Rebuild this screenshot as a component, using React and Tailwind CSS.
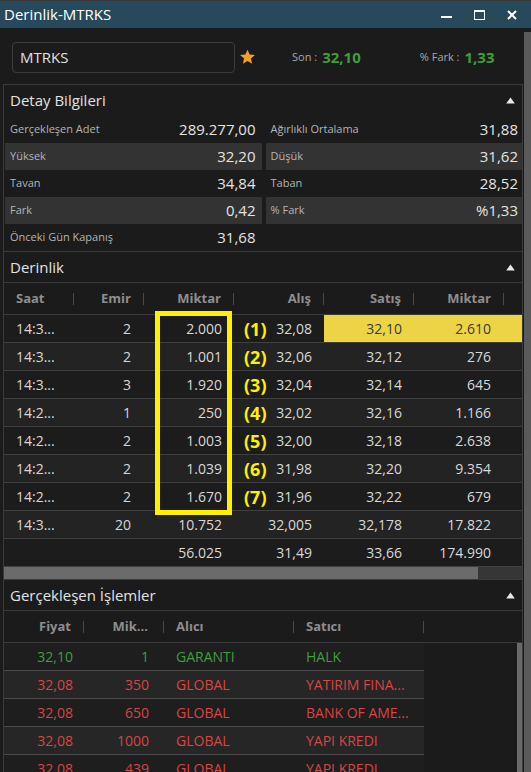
import React from "react";

const detay = [
  ["Gerçekleşen Adet", "289.277,00", "Ağırlıklı Ortalama", "31,88", false],
  ["Yüksek", "32,20", "Düşük", "31,62", true],
  ["Tavan", "34,84", "Taban", "28,52", false],
  ["Fark", "0,42", "% Fark", "%1,33", true],
  ["Önceki Gün Kapanış", "31,68", null, null, false],
];

const derinlik = [
  ["14:3...", "2", "2.000", "(1)", "32,08", "32,10", "2.610", true],
  ["14:3...", "2", "1.001", "(2)", "32,06", "32,12", "276"],
  ["14:3...", "3", "1.920", "(3)", "32,04", "32,14", "645"],
  ["14:2...", "1", "250", "(4)", "32,02", "32,16", "1.166"],
  ["14:2...", "2", "1.003", "(5)", "32,00", "32,18", "2.638"],
  ["14:2...", "2", "1.039", "(6)", "31,98", "32,20", "9.354"],
  ["14:2...", "2", "1.670", "(7)", "31,96", "32,22", "679"],
  ["14:3...", "20", "10.752", "", "32,005", "32,178", "17.822"],
  ["", "", "56.025", "", "31,49", "33,66", "174.990"],
];

const islemler = [
  ["32,10", "1", "GARANTI", "HALK", "g"],
  ["32,08", "350", "GLOBAL", "YATIRIM FINA...", "r"],
  ["32,08", "650", "GLOBAL", "BANK OF AME...", "r"],
  ["32,08", "1000", "GLOBAL", "YAPI KREDI", "r"],
  ["32,08", "439", "GLOBAL", "YAPI KREDI", "r"],
];

function Tri() {
  return (
    <svg width="9" height="7" viewBox="0 0 9 7" className="block">
      <path d="M4.5 0.5 L8.8 6.5 L0.2 6.5 Z" fill="#e8e8e8" />
    </svg>
  );
}

function SectionHeader({ title }) {
  return (
    <div className="h-[31px] flex items-center justify-between pl-[6px] pr-[7px] border-b border-[#3a3a3a]">
      <span className="text-[15px] text-[#e2e2e2]">{title}</span>
      <Tri />
    </div>
  );
}

function Sep() {
  return <span className="w-px h-[12px] bg-[#4a4a4a] shrink-0" />;
}

function HCell({ w, children, left }) {
  return (
    <div className={`${w} flex items-center shrink-0`}>
      <span className={`flex-1 ${left ? "text-left pl-3" : "text-right pr-3"}`}>{children}</span>
      <Sep />
    </div>
  );
}

export default function App() {
  return (
    <div className="w-[531px] h-[772px] overflow-hidden bg-[#1b1b1b] flex flex-col font-['Open_Sans',sans-serif] text-[#d8d8d8]">
      {/* Title bar */}
      <div className="h-[28px] shrink-0 bg-[#264a5b] border-t border-[#3a3a3a] flex items-center justify-between pl-[4px] pr-[14px]">
        <span className="text-[15px] text-white leading-none">Derinlik-MTRKS</span>
        <div className="flex items-center gap-[22px]">
          <span className="w-[11px] h-[2px] bg-white mt-[5px]" />
          <span className="w-[11px] h-[10px] border border-white border-t-[2px]" />
          <svg width="10" height="10" viewBox="0 0 10 10">
            <path d="M1 1 L9 9 M9 1 L1 9" stroke="white" strokeWidth="2" />
          </svg>
        </div>
      </div>

      <div className="flex-1 flex min-h-0">
        <div className="flex-1 flex flex-col min-w-0">
          {/* Search row */}
          <div className="h-[56px] shrink-0 flex items-center pl-[12px] pt-[2px]">
            <div className="w-[223px] h-[31px] border border-[#3c3c3c] rounded-[4px] flex items-center pl-[7px] text-[15px] text-[#e0e0e0]">
              MTRKS
            </div>
            <svg width="17" height="16" viewBox="0 0 24 23" className="ml-[4px]">
              <path d="M12 1 L15.1 8 L22.7 8.6 L16.9 13.6 L18.7 21.1 L12 17.1 L5.3 21.1 L7.1 13.6 L1.3 8.6 L8.9 8 Z" fill="#f0a024" />
            </svg>
            <span className="ml-[36px] text-[11px] text-[#a8a8a8]">Son :</span>
            <span className="ml-[5px] text-[15px] font-bold text-[#3e9e3e]">32,10</span>
            <span className="ml-[59px] text-[11px] text-[#a8a8a8]">% Fark :</span>
            <span className="ml-[5px] text-[15px] font-bold text-[#3e9e3e]">1,33</span>
          </div>

          <div className="flex-1 ml-[3px] w-[520px] border-x border-t border-[#3a3a3a] flex flex-col min-h-0">
            {/* Detay */}
            <div className="h-[31px] flex items-center justify-between pl-[6px] pr-[7px]">
              <span className="text-[15px] text-[#e2e2e2]">Detay Bilgileri</span>
              <Tri />
            </div>
            <div className="pl-px grid grid-cols-2 gap-x-[4px] border-b border-[#3a3a3a]">
              {detay.map((r, i) => (
                <React.Fragment key={i}>
                  <div className={`h-[27px] flex items-center justify-between pl-[5px] pr-[6px] ${r[4] ? "bg-[#333333]" : ""}`}>
                    <span className="text-[11px] text-[#b4b4b4]">{r[0]}</span>
                    <span className="text-[15px] text-[#e4e4e4]">{r[1]}</span>
                  </div>
                  <div className={`h-[27px] flex items-center justify-between pl-[5px] pr-[4px] ${r[4] ? "bg-[#333333]" : ""}`}>
                    {r[2] && <span className="text-[11px] text-[#b4b4b4]">{r[2]}</span>}
                    {r[3] && <span className="text-[15px] text-[#e4e4e4]">{r[3]}</span>}
                  </div>
                </React.Fragment>
              ))}
            </div>

            {/* Derinlik */}
            <SectionHeader title="Derinlik" />
            <div className="relative">
              <div className="h-[32px] flex items-center border-b border-[#3a3a3a] text-[13px] font-bold text-[#8e8e8e]">
                <HCell w="w-[70px]" left>Saat</HCell>
                <HCell w="w-[70px]">Emir</HCell>
                <HCell w="w-[90px]">Miktar</HCell>
                <HCell w="w-[90px]">Alış</HCell>
                <HCell w="w-[90px]">Satış</HCell>
                <HCell w="w-[90px]">Miktar</HCell>
              </div>
              {derinlik.map((r, i) => (
                <div
                  key={i}
                  className={`h-[28px] flex border-b border-[#404040] text-[14px] ${i % 2 === 0 ? "bg-[#1c1c1c]" : "bg-[#232323]"}`}
                >
                  <div className="w-[70px] flex items-center pl-3">{r[0]}</div>
                  <div className="w-[70px] flex items-center justify-end pr-[13px]">{r[1]}</div>
                  <div className="w-[90px] flex items-center justify-end pr-3">{r[2]}</div>
                  <div className="w-[90px] flex items-center justify-between pl-[10px] pr-3">
                    <span className="text-[18px] font-bold text-[#fff000] leading-none">{r[3]}</span>
                    <span>{r[4]}</span>
                  </div>
                  <div className={`flex-1 flex ${r[7] ? "bg-[#ecd444] text-[#3a3a3a]" : ""}`}>
                    <div className="w-[90px] flex items-center justify-end pr-3">{r[5]}</div>
                    <div className="w-[90px] flex items-center justify-end pr-[13px]">{r[6]}</div>
                  </div>
                </div>
              ))}
              <div className="absolute left-[151px] top-[28px] w-[77px] h-[204px] border-[5px] border-[#fff000]" />
            </div>
            <div className="h-[12px] flex shrink-0">
              <div className="w-[474px] bg-[#6b6b6b]" />
              <div className="flex-1 bg-[#363636]" />
            </div>

            {/* Gerçekleşen İşlemler */}
            <div className="border-t border-[#3a3a3a]">
              <SectionHeader title="Gerçekleşen İşlemler" />
            </div>
            <div className="h-[32px] flex items-center border-b border-[#3a3a3a] text-[13px] font-bold text-[#8e8e8e]">
              <HCell w="w-[80px]">Fiyat</HCell>
              <div className="w-[80px] flex items-center shrink-0">
                <span className="flex-1 text-right pr-[15px]">Mik...</span>
                <Sep />
              </div>
              <HCell w="w-[130px]" left>Alıcı</HCell>
              <HCell w="w-[130px]" left>Satıcı</HCell>
            </div>
            <div className="flex-1 flex min-h-0">
              <div className="w-[420px] flex flex-col">
                {islemler.map((r, i) => (
                  <div
                    key={i}
                    className={`h-[28px] shrink-0 flex border-b border-[#4a4a4a] text-[14px] ${r[4] === "g" ? "text-[#3e9e3e]" : "text-[#d94444]"} ${i % 2 === 1 ? "bg-[#262626]" : "bg-[#1e1e1e]"}`}
                  >
                    <div className="w-[80px] flex items-center justify-end pr-[11px]">{r[0]}</div>
                    <div className="w-[80px] flex items-center justify-end pr-[15px]">{r[1]}</div>
                    <div className="w-[130px] flex items-center pl-3">{r[2]}</div>
                    <div className="w-[130px] flex items-center pl-3">{r[3]}</div>
                  </div>
                ))}
              </div>
              <div className="flex-1" />
              <div className="w-[5px] bg-[#6a6a6a]" />
            </div>
          </div>
        </div>
        {/* outer scrollbar */}
        <div className="w-[8px] shrink-0 flex flex-col pl-[1px] bg-[#1b1b1b]">
          <div className="h-[4px]" />
          <div className="flex-1 bg-[#5a5a5a]" />
        </div>
      </div>
    </div>
  );
}
